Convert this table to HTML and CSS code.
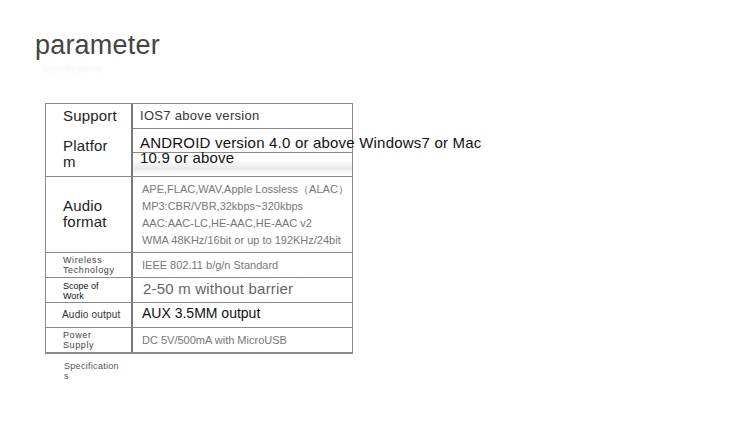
FILE: index.html
```html
<!DOCTYPE html>
<html lang="en">
<head>
  <meta charset="UTF-8" />
  <title>parameter</title>
  <link rel="stylesheet" href="styles.css">
</head>
<body>
  <h1 class="title">parameter</h1>
  <div class="ghost">Specifications</div>

  <div class="spec-table">
    <div class="row row-platform">
      <div class="label">
        <div class="label-big">Support</div>
        <div class="label-big platform">Platfor<br>m</div>
      </div>
      <div class="value value-split">
        <div class="sub sub-ios">IOS7 above version</div>
        <div class="sub sub-android">
          <p class="android">ANDROID version 4.0 or above Windows7 or Mac 10.9 or above</p>
        </div>
        <div class="sub sub-blur"></div>
      </div>
    </div>

    <div class="row row-audio">
      <div class="label label-big">Audio<br>format</div>
      <div class="value value-list">
        <div>APE,FLAC,WAV,Apple Lossless（ALAC）</div>
        <div>MP3:CBR/VBR,32kbps~320kbps</div>
        <div>AAC:AAC-LC,HE-AAC,HE-AAC v2</div>
        <div>WMA 48KHz/16bit or up to 192KHz/24bit</div>
      </div>
    </div>

    <div class="row row-small">
      <div class="label label-tiny spaced">Wireless<br>Technology</div>
      <div class="value value-grey">IEEE 802.11 b/g/n Standard</div>
    </div>

    <div class="row row-small">
      <div class="label label-tiny dark">Scope of<br>Work</div>
      <div class="value value-large">2-50 m without barrier</div>
    </div>

    <div class="row row-small">
      <div class="label label-mid">Audio output</div>
      <div class="value value-black">AUX 3.5MM output</div>
    </div>

    <div class="row row-small">
      <div class="label label-tiny spaced">Power<br>Supply</div>
      <div class="value value-grey">DC 5V/500mA with MicroUSB</div>
    </div>
  </div>
  <div class="after-label">Specification<br>s</div>
</body>
</html>
```

FILE: styles.css
```css
* {
  margin: 0;
  padding: 0;
  box-sizing: border-box;
}

body {
  background-color: #fff;
  font-family: 'Liberation Sans', Arial, sans-serif;
  color: #222;
  padding: 28px 0 0 35px;
  width: 750px;
  height: 427px;
  overflow: hidden;
}

.title {
  font-weight: normal;
  font-size: 27px;
  color: #444;
  line-height: 34px;
  letter-spacing: 0.2px;
}

.ghost {
  font-size: 10px;
  color: #f3f3f3;
  margin: 0 0 0 6px;
  height: 13px;
  line-height: 13px;
  filter: blur(1px);
}

.spec-table {
  margin: 28px 0 0 10px;
  width: 308px;
  border: 1px solid #8a8a8a;
  border-bottom-width: 2px;
}

.row {
  display: flex;
  border-top: 1px solid #8a8a8a;
}

.row:first-child {
  border-top: none;
}

.row-platform {
  height: 72px;
}

.row-audio {
  height: 76px;
}

.row-small {
  height: 25px;
}

.label {
  width: 87px;
  flex-shrink: 0;
  border-right: 2px solid #777;
  padding-left: 17px;
  color: #222;
}

.label-big {
  font-size: 15px;
  line-height: 16px;
  letter-spacing: 0.2px;
}

.row-platform .label {
  padding-top: 4px;
}

.row-platform .platform {
  margin-top: 14px;
}

.row-audio .label {
  padding-top: 21px;
}

.label-tiny {
  font-size: 9px;
  line-height: 10px;
  padding-top: 2px;
  color: #444;
}

.label-tiny.spaced {
  letter-spacing: 0.6px;
}

.label-tiny.dark {
  color: #111;
  padding-top: 3px;
}

.label-mid {
  font-size: 10px;
  line-height: 24px;
  padding-left: 16px;
  letter-spacing: 0.2px;
  color: #333;
}

.value {
  flex: 1;
  padding-left: 9px;
  min-width: 0;
}

.value-split {
  padding-left: 0;
}

.sub {
  height: 24px;
  padding-left: 7px;
}

.sub-ios {
  height: 25px;
  border-bottom: 1px solid #8a8a8a;
  font-size: 13px;
  line-height: 24px;
  color: #333;
  letter-spacing: 0.3px;
}

.sub-android {
  border-bottom: 1px solid #8a8a8a;
}

.android {
  width: 345px;
  font-size: 15px;
  line-height: 15px;
  padding-top: 6px;
  color: #111;
  letter-spacing: 0.2px;
}

.sub-blur {
  height: 22px;
  background: linear-gradient(180deg, #fff 0%, #fff 30%, #e9e9e9 70%, #f6f6f6 85%, #fff 100%);
}

.value-list {
  font-size: 11px;
  line-height: 17px;
  color: #777;
  padding-top: 4px;
}

.value-grey {
  font-size: 11px;
  line-height: 24px;
  color: #777;
}

.value-large {
  font-size: 15px;
  line-height: 22px;
  color: #666;
  padding-left: 10px;
  letter-spacing: 0.2px;
}

.value-black {
  font-size: 14px;
  line-height: 20px;
  color: #111;
  padding-left: 9px;
}

.after-label {
  margin: 7px 0 0 29px;
  font-size: 9px;
  line-height: 10px;
  color: #555;
  letter-spacing: 0.3px;
}
```
